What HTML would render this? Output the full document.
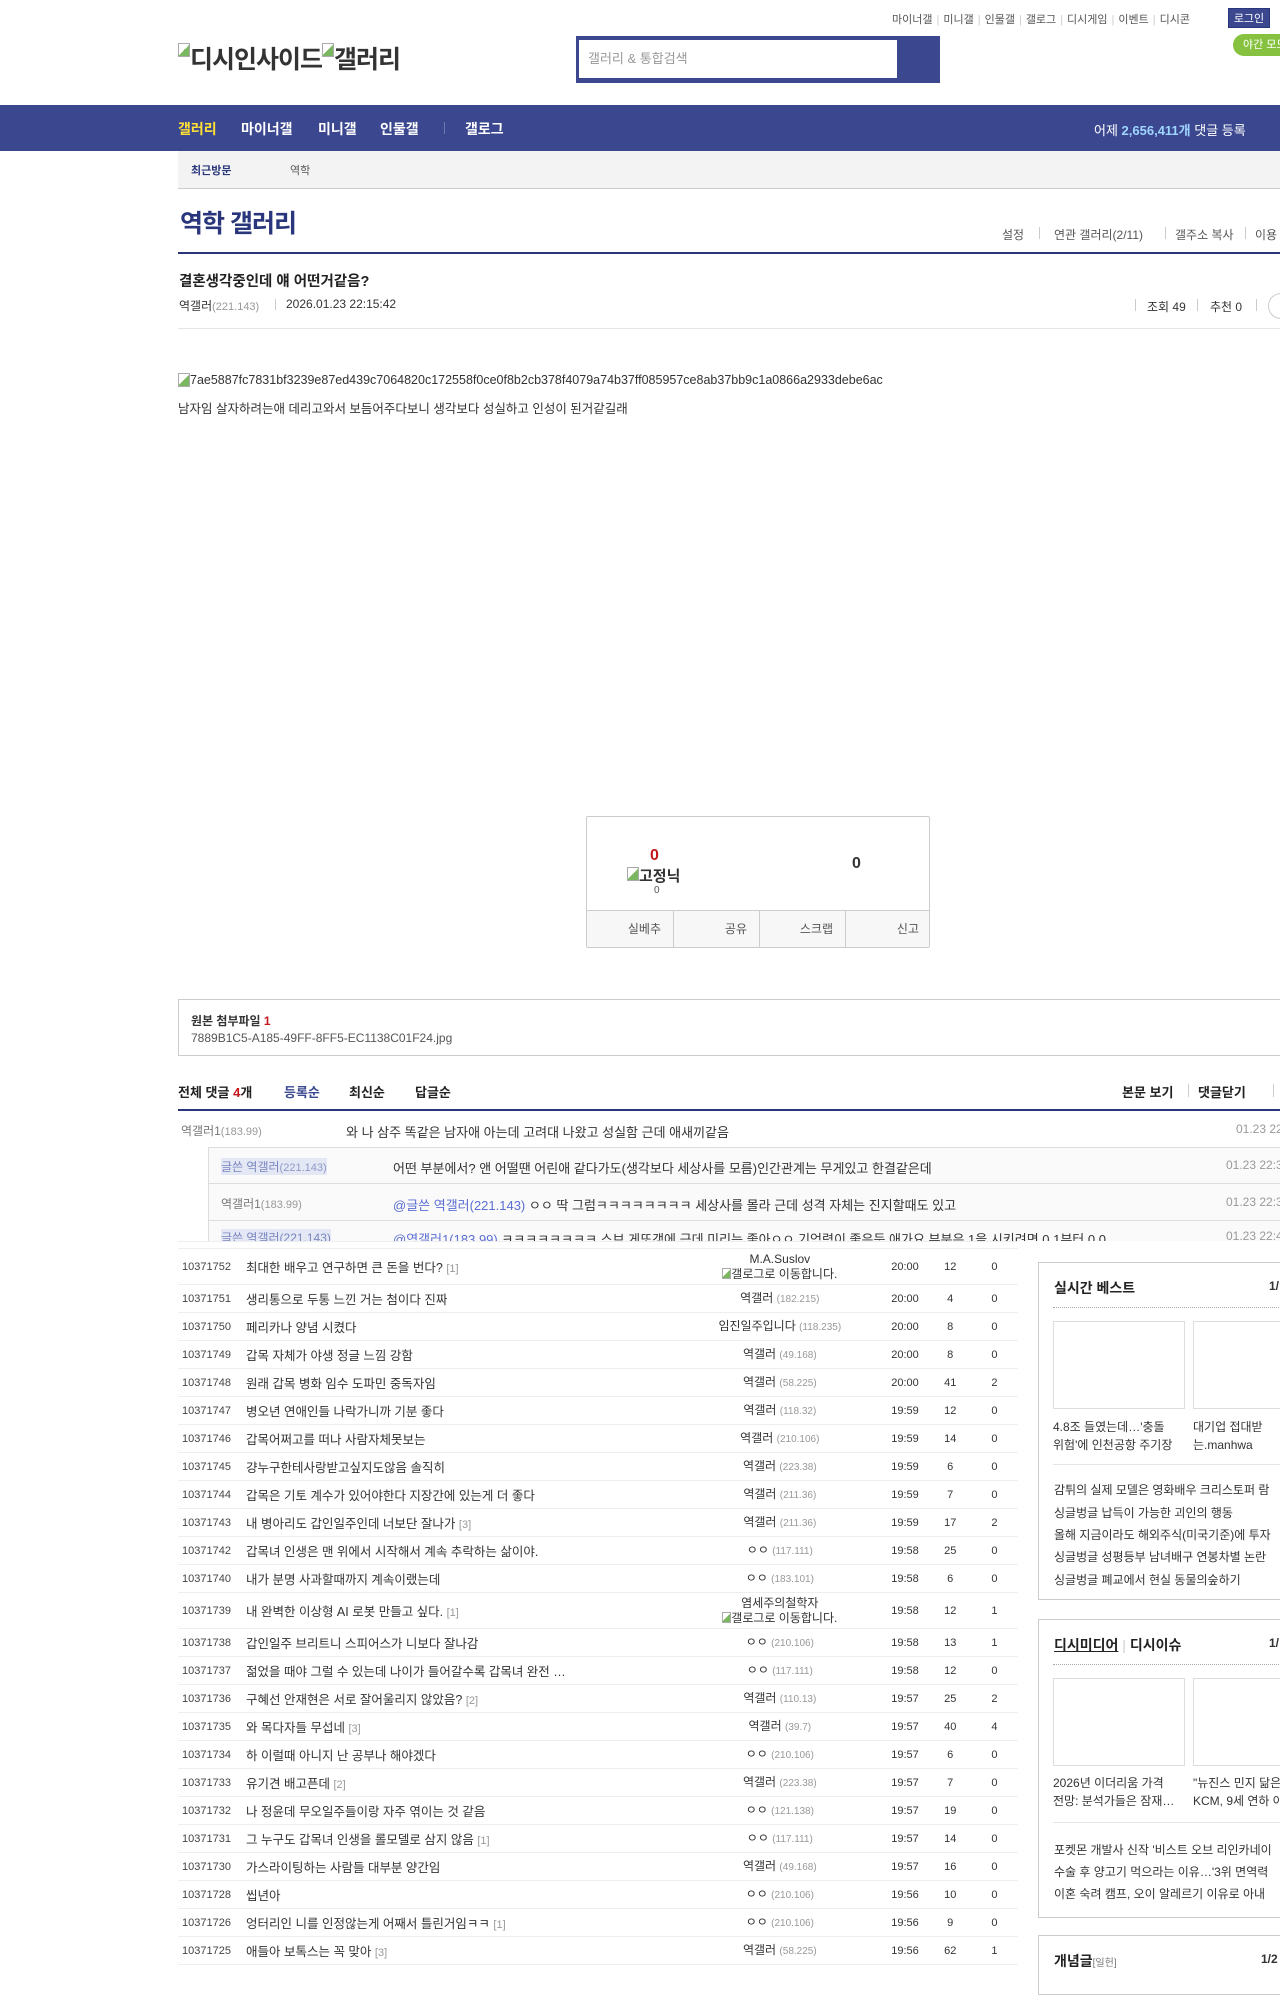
<!DOCTYPE html>
<html><head><meta charset="utf-8">
<style>
*{margin:0;padding:0;box-sizing:border-box}
body{width:1280px;height:1960px;overflow:hidden;position:relative;background:#fff;font-family:"Liberation Sans","Noto Sans CJK KR",sans-serif;color:#333;font-size:12px}
.a{position:absolute;white-space:nowrap}
.toplinks{top:11px;left:892px;font-size:11px;color:#555}
.toplinks span.sep{color:#ccc;margin:0 4px}
.login{top:8px;left:1228px;width:42px;height:20px;background:#3b4890;color:#fff;font-size:11px;line-height:20px;text-align:center;border:1px solid #29367c}
.night{top:34px;left:1233px;width:60px;height:22px;background:#86c23f;border-radius:11px 0 0 11px;color:#fff;font-size:11px;line-height:22px;padding-left:10px}
.logo{top:40px;left:178px;font-size:25px;color:#333;letter-spacing:-1px;font-weight:bold}
.brk{display:inline-block;width:12px;height:14px;border:1px solid #aaa;background:linear-gradient(135deg,#fff 50%,#7bb661 50%);vertical-align:top;margin-top:3px}
.search{top:36px;left:576px;width:364px;height:47px;background:#3b4890}
.search .in{position:absolute;left:3px;top:4px;height:38px;width:318px;background:#fff;color:#999;font-size:13px;line-height:38px;padding-left:9px}
.nav{top:105px;left:0;width:1280px;height:46px;background:#3b4890}
.nav .it{position:absolute;top:14px;color:#fff;font-weight:bold;font-size:14px}
.sub{top:151px;left:178px;width:1102px;height:38px;background:#f3f3f3;border-bottom:1px solid #ccc}
.gtitle{top:204px;left:180px;font-size:25px;font-weight:bold;color:#29367c;letter-spacing:-1px}
.glinks{top:226px;font-size:12px;color:#555}
.vl{position:absolute;width:1px;background:#ccc}
.line2{left:178px;width:1102px;height:2px;background:#29367c}
.line1{left:178px;width:1102px;height:1px;background:#e5e5e5}
.rbox{top:816px;left:586px;width:344px;height:132px;border:1px solid #ccc;border-radius:2px}
.rbot{position:absolute;left:0;top:93px;width:342px;height:37px;background:#f7f7f7;border-top:1px solid #ccc}
.rbot div{position:absolute;top:0;height:37px;line-height:37px;font-size:12px;color:#555;border-left:1px solid #ccc;width:86px;text-align:right;padding-right:12px}
.attach{top:999px;left:178px;width:1110px;height:57px;border:1px solid #ccc}
.cmt{top:1111px;left:178px;width:1102px;height:130px;overflow:hidden}
.cr{position:absolute;left:0;width:1102px;height:37px;font-size:13px;color:#333}
.cr > span{position:absolute;top:11px}
.nick{font-size:12px;color:#777}
.ip{font-size:11px;color:#999}
.list{top:1241px;left:178px;width:840px}
.row{display:flex;align-items:center;height:28px;border-bottom:1px solid #eee;font-size:12.5px;color:#333}
.row.t{height:36px}
.c1{width:72px;padding-left:4px;font-size:11px;color:#444}
.c2{width:460px;overflow:hidden}
.c2 .rc{color:#999;font-size:11px}
.c3{width:214px;text-align:center;font-size:12px;line-height:15px}
.c3 i{font-style:normal;color:#999;font-size:10px}
.c4{width:52px;text-align:center;font-size:11px}
.c5{width:44px;text-align:center;font-size:11px}
.c6{width:50px;text-align:center;font-size:11px}
.sb{left:1038px;width:260px;border:1px solid #ccc}
.sbt{position:absolute;left:15px;font-size:14px;font-weight:bold;color:#222}
.dot{position:absolute;left:14px;width:260px;border-top:1px dotted #aaa}
.th{position:absolute;width:132px;height:88px;border:1px solid #ddd}
.cap{position:absolute;font-size:12px;color:#333;line-height:18px}
.li{position:absolute;left:15px;font-size:12px;color:#333}
</style></head><body>

<div class="a toplinks">마이너갤<span class="sep">|</span>미니갤<span class="sep">|</span>인물갤<span class="sep">|</span>갤로그<span class="sep">|</span>디시게임<span class="sep">|</span>이벤트<span class="sep">|</span>디시콘</div>
<div class="a login">로그인</div>
<div class="a night">야간 모드</div>
<div class="a logo"><span class="brk"></span>디시인사이드<span class="brk"></span>갤러리</div>
<div class="a search"><div class="in">갤러리 &amp; 통합검색</div></div>

<div class="a nav">
 <div class="it" style="left:178px;color:#ffe135">갤러리</div>
 <div class="it" style="left:241px">마이너갤</div>
 <div class="it" style="left:318px">미니갤</div>
 <div class="it" style="left:380px">인물갤</div>
 <div class="vl" style="left:444px;top:17px;height:12px;background:#6d78b0"></div>
 <div class="it" style="left:465px">갤로그</div>
 <div class="it" style="left:1094px;font-weight:normal;font-size:13px;top:15px">어제 <b style="color:#9fd5ff">2,656,411개</b> 댓글 등록</div>
</div>
<div class="a sub"><span class="a" style="left:13px;top:11px;font-weight:bold;color:#29367c;font-size:11px">최근방문</span><span class="a" style="left:112px;top:11px;font-size:11px;color:#555">역학</span></div>

<div class="a gtitle">역학 갤러리</div>
<div class="a glinks" style="left:1002px">설정</div>
<div class="vl" style="left:1039px;top:227px;height:12px"></div>
<div class="a glinks" style="left:1054px">연관 갤러리(2/11)</div>
<div class="vl" style="left:1165px;top:227px;height:12px"></div>
<div class="a glinks" style="left:1175px">갤주소 복사</div>
<div class="vl" style="left:1245px;top:227px;height:12px"></div>
<div class="a glinks" style="left:1255px">이용</div>
<div class="a line2" style="top:252px"></div>

<div class="a" style="top:270px;left:179px;font-size:14.5px;font-weight:bold;color:#222">결혼생각중인데 얘 어떤거같음?</div>
<div class="a" style="top:297px;left:179px;font-size:12px;color:#333">역갤러<span class="ip">(221.143)</span></div>
<div class="vl" style="left:275px;top:299px;height:11px"></div>
<div class="a" style="top:297px;left:286px;font-size:12px;color:#333">2026.01.23 22:15:42</div>
<div class="vl" style="left:1135px;top:299px;height:12px"></div>
<div class="a" style="top:298px;left:1147px;font-size:12px">조회 49</div>
<div class="vl" style="left:1197px;top:299px;height:12px"></div>
<div class="a" style="top:298px;left:1210px;font-size:12px">추천 0</div>
<div class="vl" style="left:1256px;top:299px;height:12px"></div>
<div class="a" style="top:293px;left:1268px;width:26px;height:26px;border:1px solid #ccc;border-radius:13px"></div>
<div class="a line1" style="top:328px"></div>

<div class="a" style="top:373px;left:178px;font-size:12.5px;color:#333"><span class="brk" style="margin-top:0"></span>7ae5887fc7831bf3239e87ed439c7064820c172558f0ce0f8b2cb378f4079a74b37ff085957ce8ab37bb9c1a0866a2933debe6ac</div>
<div class="a" style="top:398px;left:178px;font-size:12.5px;color:#333">남자임 살자하려는애 데리고와서 보듬어주다보니 생각보다 성실하고 인성이 된거같길래</div>

<div class="a rbox">
 <div class="a" style="left:63px;top:30px;color:#c4161c;font-weight:bold;font-size:16px">0</div>
 <div class="a" style="left:40px;top:48px;font-size:15px;font-weight:bold;color:#333"><span class="brk" style="margin-top:2px"></span>고정닉</div>
 <div class="a" style="left:67px;top:68px;font-size:10px;color:#555">0</div>
 <div class="a" style="left:265px;top:38px;font-weight:bold;font-size:16px;color:#333">0</div>
 <div class="rbot">
  <div style="left:0;border-left:none">실베추</div>
  <div style="left:86px">공유</div>
  <div style="left:172px">스크랩</div>
  <div style="left:258px">신고</div>
 </div>
</div>

<div class="a attach">
 <div class="a" style="left:12px;top:12px;font-weight:bold;font-size:12px;color:#333">원본 첨부파일 <span style="color:#c4161c">1</span></div>
 <div class="a" style="left:12px;top:31px;font-size:12px;color:#555">7889B1C5-A185-49FF-8FF5-EC1138C01F24.jpg</div>
</div>

<div class="a" style="top:1082px;left:178px;font-size:13px;font-weight:bold;color:#222">전체 댓글 <span style="color:#c4161c">4</span>개</div>
<div class="a" style="top:1082px;left:284px;font-size:13px;font-weight:bold;color:#3b4890">등록순</div>
<div class="a" style="top:1082px;left:349px;font-size:13px;font-weight:bold;color:#222">최신순</div>
<div class="a" style="top:1082px;left:415px;font-size:13px;font-weight:bold;color:#222">답글순</div>
<div class="a" style="top:1082px;left:1122px;font-size:13px;font-weight:bold;color:#222">본문 보기</div>
<div class="vl" style="left:1188px;top:1084px;height:13px"></div>
<div class="a" style="top:1082px;left:1198px;font-size:13px;font-weight:bold;color:#222">댓글닫기</div>
<div class="vl" style="left:1273px;top:1084px;height:13px"></div>
<div class="a line2" style="top:1109px"></div>

<div class="a cmt">
 <div class="cr" style="top:0"><span class="nick" style="left:3px">역갤러1<span class="ip">(183.99)</span></span><span style="left:168px">와 나 삼주 똑같은 남자애 아는데 고려대 나왔고 성실함 근데 애새끼같음</span><span class="ip" style="left:1058px;font-size:12px">01.23 22:15</span></div>
 <div style="position:absolute;left:30px;top:36px;width:1100px;height:120px;background:#fafafa;border:1px solid #ddd"></div>
 <div class="cr" style="top:36px;left:30px;border-bottom:1px solid #ddd"><span class="nick" style="left:13px;background:#e4e8f5;color:#7a86c0">글쓴 역갤러<span class="ip" style="color:#8f99c8">(221.143)</span></span><span style="left:185px">어떤 부분에서? 앤 어떨땐 어린애 같다가도(생각보다 세상사를 모름)인간관계는 무게있고 한결같은데</span><span class="ip" style="left:1018px;font-size:12px">01.23 22:30</span></div>
 <div class="cr" style="top:73px;left:30px;border-bottom:1px solid #ddd"><span class="nick" style="left:13px">역갤러1<span class="ip">(183.99)</span></span><span style="left:185px"><b style="font-weight:normal;color:#5a6ed3">@글쓴 역갤러(221.143)</b> ㅇㅇ 딱 그럼ㅋㅋㅋㅋㅋㅋㅋㅋ 세상사를 몰라 근데 성격 자체는 진지할때도 있고</span><span class="ip" style="left:1018px;font-size:12px">01.23 22:31</span></div>
 <div class="cr" style="top:110px;left:30px"><span class="nick" style="left:13px;background:#e4e8f5;color:#7a86c0;top:8px">글쓴 역갤러(221.143)</span><span style="left:185px;top:8px"><b style="font-weight:normal;color:#5a6ed3">@역갤러1(183.99)</b> ㅋㅋㅋㅋㅋㅋㅋㅋ 스브 게또갱에 근데 미리는 좋아ㅇㅇ 기억력이 좋은듯 애가요 부분은 1을 시키려면 0.1부터 0.0</span><span class="ip" style="left:1018px;font-size:12px;top:8px">01.23 22:40</span></div>
</div>

<div class="a list" style="border-top:1px solid #eee;padding-top:6px;background:#fff">
<div style="border-top:1px solid #eee"></div>
<div class="row t"><div class="c1">10371752</div><div class="c2">최대한 배우고 연구하면 큰 돈을 번다? <span class="rc">[1]</span></div><div class="c3">M.A.Suslov<br><span class="brk" style="width:9px;height:11px;margin-top:1px"></span>갤로그로 이동합니다.</div><div class="c4">20:00</div><div class="c5">12</div><div class="c6">0</div></div>
<div class="row"><div class="c1">10371751</div><div class="c2">생리통으로 두통 느낀 거는 첨이다 진짜</div><div class="c3">역갤러 <i>(182.215)</i></div><div class="c4">20:00</div><div class="c5">4</div><div class="c6">0</div></div>
<div class="row"><div class="c1">10371750</div><div class="c2">페리카나 양념 시켰다</div><div class="c3">임진일주입니다 <i>(118.235)</i></div><div class="c4">20:00</div><div class="c5">8</div><div class="c6">0</div></div>
<div class="row"><div class="c1">10371749</div><div class="c2">갑목 자체가 야생 정글 느낌 강함</div><div class="c3">역갤러 <i>(49.168)</i></div><div class="c4">20:00</div><div class="c5">8</div><div class="c6">0</div></div>
<div class="row"><div class="c1">10371748</div><div class="c2">원래 갑목 병화 임수 도파민 중독자임</div><div class="c3">역갤러 <i>(58.225)</i></div><div class="c4">20:00</div><div class="c5">41</div><div class="c6">2</div></div>
<div class="row"><div class="c1">10371747</div><div class="c2">병오년 연애인들 나락가니까 기분 좋다</div><div class="c3">역갤러 <i>(118.32)</i></div><div class="c4">19:59</div><div class="c5">12</div><div class="c6">0</div></div>
<div class="row"><div class="c1">10371746</div><div class="c2">갑목어쩌고를 떠나 사람자체못보는</div><div class="c3">역갤러 <i>(210.106)</i></div><div class="c4">19:59</div><div class="c5">14</div><div class="c6">0</div></div>
<div class="row"><div class="c1">10371745</div><div class="c2">걍누구한테사랑받고싶지도않음 솔직히</div><div class="c3">역갤러 <i>(223.38)</i></div><div class="c4">19:59</div><div class="c5">6</div><div class="c6">0</div></div>
<div class="row"><div class="c1">10371744</div><div class="c2">갑목은 기토 계수가 있어야한다 지장간에 있는게 더 좋다</div><div class="c3">역갤러 <i>(211.36)</i></div><div class="c4">19:59</div><div class="c5">7</div><div class="c6">0</div></div>
<div class="row"><div class="c1">10371743</div><div class="c2">내 병아리도 갑인일주인데 너보단 잘나가 <span class="rc">[3]</span></div><div class="c3">역갤러 <i>(211.36)</i></div><div class="c4">19:59</div><div class="c5">17</div><div class="c6">2</div></div>
<div class="row"><div class="c1">10371742</div><div class="c2">갑목녀 인생은 맨 위에서 시작해서 계속 추락하는 삶이야.</div><div class="c3">ㅇㅇ <i>(117.111)</i></div><div class="c4">19:58</div><div class="c5">25</div><div class="c6">0</div></div>
<div class="row"><div class="c1">10371740</div><div class="c2">내가 분명 사과할때까지 계속이랬는데</div><div class="c3">ㅇㅇ <i>(183.101)</i></div><div class="c4">19:58</div><div class="c5">6</div><div class="c6">0</div></div>
<div class="row t"><div class="c1">10371739</div><div class="c2">내 완벽한 이상형 AI 로봇 만들고 싶다. <span class="rc">[1]</span></div><div class="c3">염세주의철학자<br><span class="brk" style="width:9px;height:11px;margin-top:1px"></span>갤로그로 이동합니다.</div><div class="c4">19:58</div><div class="c5">12</div><div class="c6">1</div></div>
<div class="row"><div class="c1">10371738</div><div class="c2">갑인일주 브리트니 스피어스가 니보다 잘나감</div><div class="c3">ㅇㅇ <i>(210.106)</i></div><div class="c4">19:58</div><div class="c5">13</div><div class="c6">1</div></div>
<div class="row"><div class="c1">10371737</div><div class="c2">젊었을 때야 그럴 수 있는데 나이가 들어갈수록 갑목녀 완전 …</div><div class="c3">ㅇㅇ <i>(117.111)</i></div><div class="c4">19:58</div><div class="c5">12</div><div class="c6">0</div></div>
<div class="row"><div class="c1">10371736</div><div class="c2">구혜선 안재현은 서로 잘어울리지 않았음? <span class="rc">[2]</span></div><div class="c3">역갤러 <i>(110.13)</i></div><div class="c4">19:57</div><div class="c5">25</div><div class="c6">2</div></div>
<div class="row"><div class="c1">10371735</div><div class="c2">와 목다자들 무섭네 <span class="rc">[3]</span></div><div class="c3">역갤러 <i>(39.7)</i></div><div class="c4">19:57</div><div class="c5">40</div><div class="c6">4</div></div>
<div class="row"><div class="c1">10371734</div><div class="c2">하 이럴때 아니지 난 공부나 해야겠다</div><div class="c3">ㅇㅇ <i>(210.106)</i></div><div class="c4">19:57</div><div class="c5">6</div><div class="c6">0</div></div>
<div class="row"><div class="c1">10371733</div><div class="c2">유기견 배고픈데 <span class="rc">[2]</span></div><div class="c3">역갤러 <i>(223.38)</i></div><div class="c4">19:57</div><div class="c5">7</div><div class="c6">0</div></div>
<div class="row"><div class="c1">10371732</div><div class="c2">나 정윤데 무오일주들이랑 자주 엮이는 것 같음</div><div class="c3">ㅇㅇ <i>(121.138)</i></div><div class="c4">19:57</div><div class="c5">19</div><div class="c6">0</div></div>
<div class="row"><div class="c1">10371731</div><div class="c2">그 누구도 갑목녀 인생을 롤모델로 삼지 않음 <span class="rc">[1]</span></div><div class="c3">ㅇㅇ <i>(117.111)</i></div><div class="c4">19:57</div><div class="c5">14</div><div class="c6">0</div></div>
<div class="row"><div class="c1">10371730</div><div class="c2">가스라이팅하는 사람들 대부분 양간임</div><div class="c3">역갤러 <i>(49.168)</i></div><div class="c4">19:57</div><div class="c5">16</div><div class="c6">0</div></div>
<div class="row"><div class="c1">10371728</div><div class="c2">씹년아</div><div class="c3">ㅇㅇ <i>(210.106)</i></div><div class="c4">19:56</div><div class="c5">10</div><div class="c6">0</div></div>
<div class="row"><div class="c1">10371726</div><div class="c2">엉터리인 니를 인정않는게 어째서 틀린거임ㅋㅋ <span class="rc">[1]</span></div><div class="c3">ㅇㅇ <i>(210.106)</i></div><div class="c4">19:56</div><div class="c5">9</div><div class="c6">0</div></div>
<div class="row"><div class="c1">10371725</div><div class="c2">애들아 보톡스는 꼭 맞아 <span class="rc">[3]</span></div><div class="c3">역갤러 <i>(58.225)</i></div><div class="c4">19:56</div><div class="c5">62</div><div class="c6">1</div></div>
</div>

<div class="a sb" style="top:1262px;height:338px">
 <div class="sbt" style="top:15px">실시간 베스트</div>
 <div class="a" style="left:230px;top:16px;font-weight:bold;font-size:12px">1/</div>
 <div class="dot" style="top:44px"></div>
 <div class="th" style="left:14px;top:58px"></div>
 <div class="th" style="left:154px;top:58px"></div>
 <div class="cap" style="left:14px;top:155px">4.8조 들였는데…'충돌<br>위험'에 인천공항 주기장</div>
 <div class="cap" style="left:154px;top:155px">대기업 접대받<br>는.manhwa</div>
 <div class="a" style="left:14px;top:201px;width:260px;border-top:1px solid #e5e5e5"></div>
 <div class="li" style="top:218px">감튀의 실제 모델은 영화배우 크리스토퍼 람</div>
 <div class="li" style="top:241px">싱글벙글 납득이 가능한 괴인의 행동</div>
 <div class="li" style="top:263px">올해 지금이라도 해외주식(미국기준)에 투자</div>
 <div class="li" style="top:285px">싱글벙글 성평등부 남녀배구 연봉차별 논란</div>
 <div class="li" style="top:308px">싱글벙글 폐교에서 현실 동물의숲하기</div>
</div>

<div class="a sb" style="top:1619px;height:299px">
 <div class="sbt" style="top:15px"><u>디시미디어</u> <span style="color:#ccc;font-weight:normal">|</span> 디시이슈</div>
 <div class="a" style="left:230px;top:16px;font-weight:bold;font-size:12px">1/</div>
 <div class="dot" style="top:44px"></div>
 <div class="th" style="left:14px;top:58px"></div>
 <div class="th" style="left:154px;top:58px"></div>
 <div class="cap" style="left:14px;top:154px">2026년 이더리움 가격<br>전망: 분석가들은 잠재…</div>
 <div class="cap" style="left:154px;top:154px">"뉴진스 민지 닮은<br>KCM, 9세 연하 아</div>
 <div class="a" style="left:14px;top:202px;width:260px;border-top:1px solid #e5e5e5"></div>
 <div class="li" style="top:221px">포켓몬 개발사 신작 '비스트 오브 리인카네이</div>
 <div class="li" style="top:243px">수술 후 양고기 먹으라는 이유…'3위 면역력</div>
 <div class="li" style="top:265px">이혼 숙려 캠프, 오이 알레르기 이유로 아내</div>
</div>

<div class="a sb" style="top:1935px;height:60px">
 <div class="sbt" style="top:15px">개념글<span style="font-size:10px;font-weight:normal;color:#777">[일헌]</span></div>
 <div class="a" style="left:222px;top:16px;font-size:12px;font-weight:bold">1/2</div>
</div>
</body></html>
